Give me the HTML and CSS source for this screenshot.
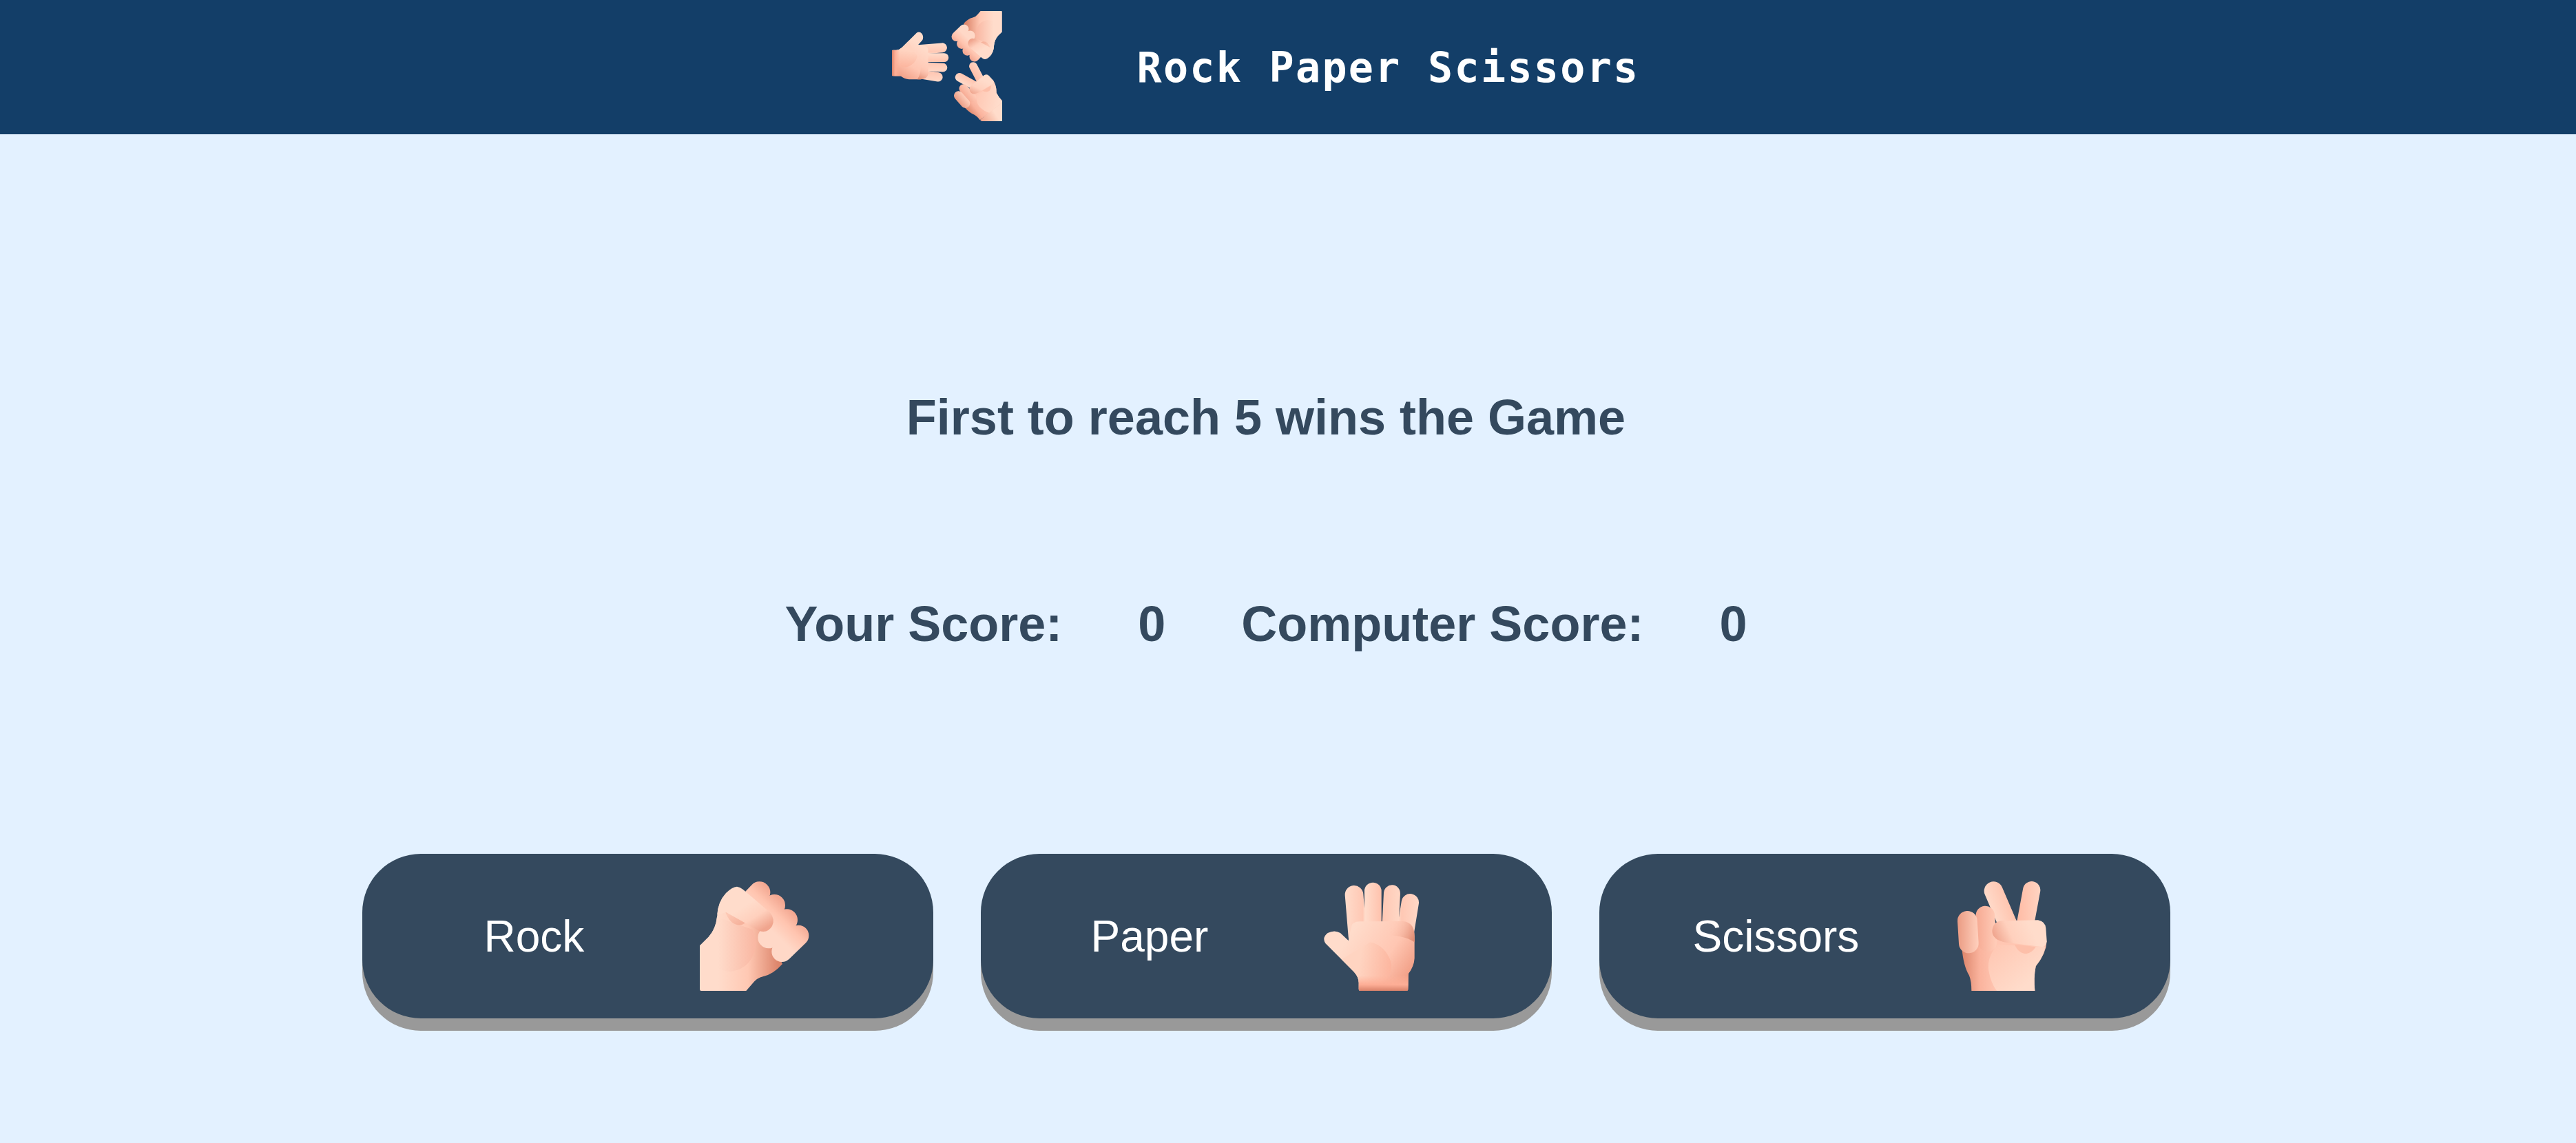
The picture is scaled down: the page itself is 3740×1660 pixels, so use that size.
FILE: index.html
```html
<!DOCTYPE html>
<html lang="en">
<head>
    <meta charset="UTF-8">
    <title>Rock Paper Scissors</title>
    <link rel="stylesheet" href="styles.css">
</head>
<body>
    <header class="topbar">
        <svg class="logo" viewBox="54 18 477 477" aria-hidden="true">
            <defs>
                <linearGradient id="rock-palm" gradientUnits="userSpaceOnUse" x1="190" y1="0" x2="450" y2="0">
                    <stop offset="0" stop-color="#ffdccb"/>
                    <stop offset="0.5" stop-color="#ffc8b3"/>
                    <stop offset="1" stop-color="#dd866c"/>
                </linearGradient>
                <linearGradient id="rock-heel" gradientUnits="userSpaceOnUse" x1="190" y1="0" x2="360" y2="0">
                    <stop offset="0" stop-color="#ffdccb"/>
                    <stop offset="1" stop-color="#f9b5a0"/>
                </linearGradient>
                <linearGradient id="rock-finger" gradientUnits="userSpaceOnUse" x1="410" y1="90" x2="325" y2="175">
                    <stop offset="0" stop-color="#f3a892"/>
                    <stop offset="0.45" stop-color="#ffc4af"/>
                    <stop offset="1" stop-color="#ffd8c7"/>
                </linearGradient>
                <linearGradient id="rock-thumb" gradientUnits="userSpaceOnUse" x1="300" y1="170" x2="370" y2="280">
                    <stop offset="0" stop-color="#ffdccb"/>
                    <stop offset="0.5" stop-color="#ffd0bd"/>
                    <stop offset="1" stop-color="#f0a58e"/>
                </linearGradient>
                <linearGradient id="rock-knuckle" gradientUnits="userSpaceOnUse" x1="240" y1="200" x2="280" y2="250">
                    <stop offset="0" stop-color="#fdc8b4"/>
                    <stop offset="1" stop-color="#f6b29c"/>
                </linearGradient>

                <linearGradient id="paper-finger" gradientUnits="userSpaceOnUse" x1="185" y1="0" x2="510" y2="0">
                    <stop offset="0" stop-color="#ffdccb"/>
                    <stop offset="0.24" stop-color="#ffc8b4"/>
                    <stop offset="0.27" stop-color="#ffdccb"/>
                    <stop offset="0.48" stop-color="#ffc3ae"/>
                    <stop offset="0.52" stop-color="#ffc9b5"/>
                    <stop offset="0.72" stop-color="#ffd6c4"/>
                    <stop offset="0.76" stop-color="#ffc8b4"/>
                    <stop offset="1" stop-color="#ffd8c7"/>
                </linearGradient>
                <linearGradient id="paper-palm" gradientUnits="userSpaceOnUse" x1="220" y1="270" x2="490" y2="440">
                    <stop offset="0" stop-color="#ffdccb"/>
                    <stop offset="0.6" stop-color="#ffc6b2"/>
                    <stop offset="1" stop-color="#f19e85"/>
                </linearGradient>
                <linearGradient id="paper-mound" gradientUnits="userSpaceOnUse" x1="250" y1="400" x2="390" y2="420">
                    <stop offset="0" stop-color="#ffd4c1"/>
                    <stop offset="1" stop-color="#fcb59e"/>
                </linearGradient>
                <linearGradient id="paper-crease" gradientUnits="userSpaceOnUse" x1="390" y1="255" x2="490" y2="300">
                    <stop offset="0" stop-color="#ffc8b4" stop-opacity="0"/>
                    <stop offset="1" stop-color="#e08d74"/>
                </linearGradient>
                <linearGradient id="paper-wrist" gradientUnits="userSpaceOnUse" x1="0" y1="470" x2="0" y2="537">
                    <stop offset="0" stop-color="#ffb49c" stop-opacity="0"/>
                    <stop offset="0.6" stop-color="#fdae96"/>
                    <stop offset="1" stop-color="#d9826a"/>
                </linearGradient>

                <linearGradient id="peace-palm" gradientUnits="userSpaceOnUse" x1="150" y1="0" x2="300" y2="0">
                    <stop offset="0" stop-color="#dd866c"/>
                    <stop offset="0.5" stop-color="#fab39d"/>
                    <stop offset="1" stop-color="#ffc6b2"/>
                </linearGradient>
                <linearGradient id="peace-pinky" gradientUnits="userSpaceOnUse" x1="128" y1="0" x2="220" y2="0">
                    <stop offset="0" stop-color="#ea9a82"/>
                    <stop offset="1" stop-color="#ffd0bd"/>
                </linearGradient>
                <linearGradient id="peace-ring" gradientUnits="userSpaceOnUse" x1="210" y1="0" x2="295" y2="0">
                    <stop offset="0" stop-color="#f6a992"/>
                    <stop offset="1" stop-color="#ffcbb7"/>
                </linearGradient>
                <linearGradient id="peace-index" gradientUnits="userSpaceOnUse" x1="250" y1="120" x2="330" y2="90">
                    <stop offset="0" stop-color="#ffdac9"/>
                    <stop offset="1" stop-color="#ffc5b0"/>
                </linearGradient>
                <linearGradient id="peace-middle" gradientUnits="userSpaceOnUse" x1="395" y1="0" x2="490" y2="0">
                    <stop offset="0" stop-color="#ffbda7"/>
                    <stop offset="1" stop-color="#ffd4c2"/>
                </linearGradient>
                <linearGradient id="peace-thumb" gradientUnits="userSpaceOnUse" x1="285" y1="310" x2="440" y2="240">
                    <stop offset="0" stop-color="#eea18a"/>
                    <stop offset="0.45" stop-color="#ffd0bd"/>
                    <stop offset="1" stop-color="#ffdccb"/>
                </linearGradient>
                <linearGradient id="peace-heel" gradientUnits="userSpaceOnUse" x1="290" y1="350" x2="430" y2="510">
                    <stop offset="0" stop-color="#ffc8b4"/>
                    <stop offset="1" stop-color="#ffdccb"/>
                </linearGradient>
                <linearGradient id="peace-corner" gradientUnits="userSpaceOnUse" x1="445" y1="495" x2="500" y2="460">
                    <stop offset="0" stop-color="#f2a68e"/>
                    <stop offset="1" stop-color="#ffdccb"/>
                </linearGradient>

                <g id="hand-rock">
                    <path d="M110 340 L150 300 Q180 265 185 215 Q188 150 225 110 L330 120 L470 420 Q430 465 385 475 Q360 480 340 505 L312 537 L116 537 Q110 537 110 530 Z" fill="url(#rock-palm)"/>
                    <path d="M150 300 Q180 265 185 215 L340 270 L358 330 Q340 440 245 453 Q180 450 150 400 Z" fill="url(#rock-heel)"/>
                    <path d="M370 108 L330 150" stroke="url(#rock-finger)" stroke-width="94" stroke-linecap="round" fill="none"/>
                    <path d="M435 164 L395 205" stroke="url(#rock-finger)" stroke-width="94" stroke-linecap="round" fill="none"/>
                    <path d="M489 228 L410 305" stroke="url(#rock-finger)" stroke-width="94" stroke-linecap="round" fill="none"/>
                    <path d="M540 296 L468 366" stroke="url(#rock-finger)" stroke-width="90" stroke-linecap="round" fill="none"/>
                    <path d="M222 195 Q245 255 290 250 Q310 245 320 225 L250 185 Z" fill="url(#rock-knuckle)"/>
                    <path d="M186 205 Q188 150 225 110 Q250 85 272 83 Q285 84 298 95 L415 195 Q440 225 425 255 Q405 288 368 275 L225 195 Z" fill="url(#rock-thumb)"/>
                </g>

                <g id="hand-paper">
                    <path d="M225 118 L240 300" stroke="url(#paper-finger)" stroke-width="80" stroke-linecap="round" fill="none"/>
                    <path d="M307 102 L307 270" stroke="url(#paper-finger)" stroke-width="74" stroke-linecap="round" fill="none"/>
                    <path d="M390 112 L382 270" stroke="url(#paper-finger)" stroke-width="72" stroke-linecap="round" fill="none"/>
                    <path d="M469 152 L445 300" stroke="url(#paper-finger)" stroke-width="76" stroke-linecap="round" fill="none"/>
                    <path d="M200 318 L215 250 Q225 235 250 235 L440 234 Q488 240 488 300 L488 395 Q486 430 462 462 L460 530 Q460 537 452 537 L252 537 Q245 537 245 530 L245 500 Q245 478 225 455 L100 330 Q84 305 110 285 Q140 270 165 285 Z" fill="url(#paper-palm)"/>
                    <path d="M296 325 Q360 340 385 410 Q395 470 345 500 L245 500 Q245 478 225 455 L170 400 Z" fill="url(#paper-mound)"/>
                    <path d="M380 295 Q450 298 488 325 L488 300 Q488 240 440 234 L300 235 Z" fill="url(#paper-crease)"/>
                    <path d="M245 470 L462 470 L460 530 Q460 537 452 537 L252 537 Q245 537 245 530 Z" fill="url(#paper-wrist)"/>
                </g>

                <g id="hand-scissors">
                    <path d="M286 102 L360 275" stroke="url(#peace-index)" stroke-width="82" stroke-linecap="round" fill="none"/>
                    <path d="M452 98 L420 270" stroke="url(#peace-middle)" stroke-width="76" stroke-linecap="round" fill="none"/>
                    <path d="M148 350 Q155 430 180 470 Q190 495 190 537 L466 537 Q460 480 470 430 Q515 375 518 320 L300 290 Z" fill="url(#peace-palm)"/>
                    <path d="M250 208 L260 325" stroke="url(#peace-ring)" stroke-width="82" stroke-linecap="round" fill="none"/>
                    <path d="M172 232 L178 330" stroke="url(#peace-pinky)" stroke-width="86" stroke-linecap="round" fill="none"/>
                    <path d="M305 335 Q255 390 265 450 Q275 505 300 537 L466 537 Q460 480 470 430 Q505 385 510 345 Z" fill="url(#peace-heel)"/>
                    <path d="M378 335 Q395 375 430 375 Q455 370 470 345 Z" fill="#fdbfa9"/>
                    <path d="M320 232 L480 229 Q512 235 514 265 L518 320 Q515 340 500 346 L340 326 Q280 315 280 275 Q285 235 320 232 Z" fill="url(#peace-thumb)"/>
                </g>
            </defs>
            <use href="#hand-paper" transform="translate(333 60) rotate(90) scale(.52)"/>
            <use href="#hand-rock" transform="translate(581 265) rotate(180) scale(.46)"/>
            <polygon points="436,490 442,495 531,495 531,405" fill="url(#peace-corner)"/>
            <use href="#hand-scissors" transform="translate(214 349) rotate(-38) scale(.46)"/>
        </svg>
        <h1 class="title">Rock Paper Scissors</h1>
    </header>

    <main class="game">
        <h2 class="goal">First to reach 5 wins the Game</h2>

        <div class="scores">
            <span>Your Score:</span>
            <span>0</span>
            <span>Computer Score:</span>
            <span>0</span>
        </div>

        <div class="choices">
            <button class="choice choice-rock">
                <span>Rock</span>
                <svg class="hand" viewBox="110 60 480 480" aria-hidden="true"><use href="#hand-rock"/></svg>
            </button>
            <button class="choice choice-paper">
                <span>Paper</span>
                <svg class="hand" viewBox="60 60 480 480" aria-hidden="true"><use href="#hand-paper"/></svg>
            </button>
            <button class="choice choice-scissors">
                <span>Scissors</span>
                <svg class="hand" viewBox="84 60 480 480" aria-hidden="true"><use href="#hand-scissors"/></svg>
            </button>
        </div>
    </main>
</body>
</html>
```

FILE: styles.css
```css
* {
    box-sizing: border-box;
}
body {
    margin: 0;
    min-height: 1660px;
    background: #e3f1ff;
    font-family: 'Liberation Sans', Arial, sans-serif;
    color: #34495e;
}
.topbar {
    height: 195px;
    background: #133e68;
    display: flex;
    align-items: center;
    justify-content: center;
    gap: 195px;
    padding-right: 64px;
}
.logo {
    width: 160px;
    height: 160px;
    margin-bottom: 3px;
}
.title {
    margin: 0;
    color: white;
    font-family: 'DejaVu Sans Mono', monospace;
    font-size: 60px;
    letter-spacing: 2.3px;
    font-weight: bold;
}
.game {
    display: flex;
    flex-direction: column;
    align-items: center;
    padding-right: 64px;
}
.goal {
    margin: 369px 0 0;
    font-size: 72px;
    line-height: 84px;
}
.scores {
    margin-top: 216px;
    display: flex;
    gap: 110px;
    font-size: 72px;
    font-weight: bold;
    line-height: 84px;
}
.choices {
    margin-top: 292px;
    display: flex;
    gap: 69px;
}
.choice {
    width: 829px;
    height: 239px;
    display: flex;
    align-items: center;
    padding: 0;
    border: none;
    border-radius: 85px;
    background: #34495e;
    box-shadow: 0 18px 0 #999;
    color: white;
    font-family: inherit;
    font-size: 64px;
    cursor: pointer;
}
.choice-rock {
    padding-left: 177px;
    gap: 168px;
}
.choice-paper {
    padding-left: 160px;
    gap: 157px;
}
.choice-scissors {
    padding-left: 136px;
    gap: 128px;
}
.hand {
    width: 160px;
    height: 160px;
}
```
